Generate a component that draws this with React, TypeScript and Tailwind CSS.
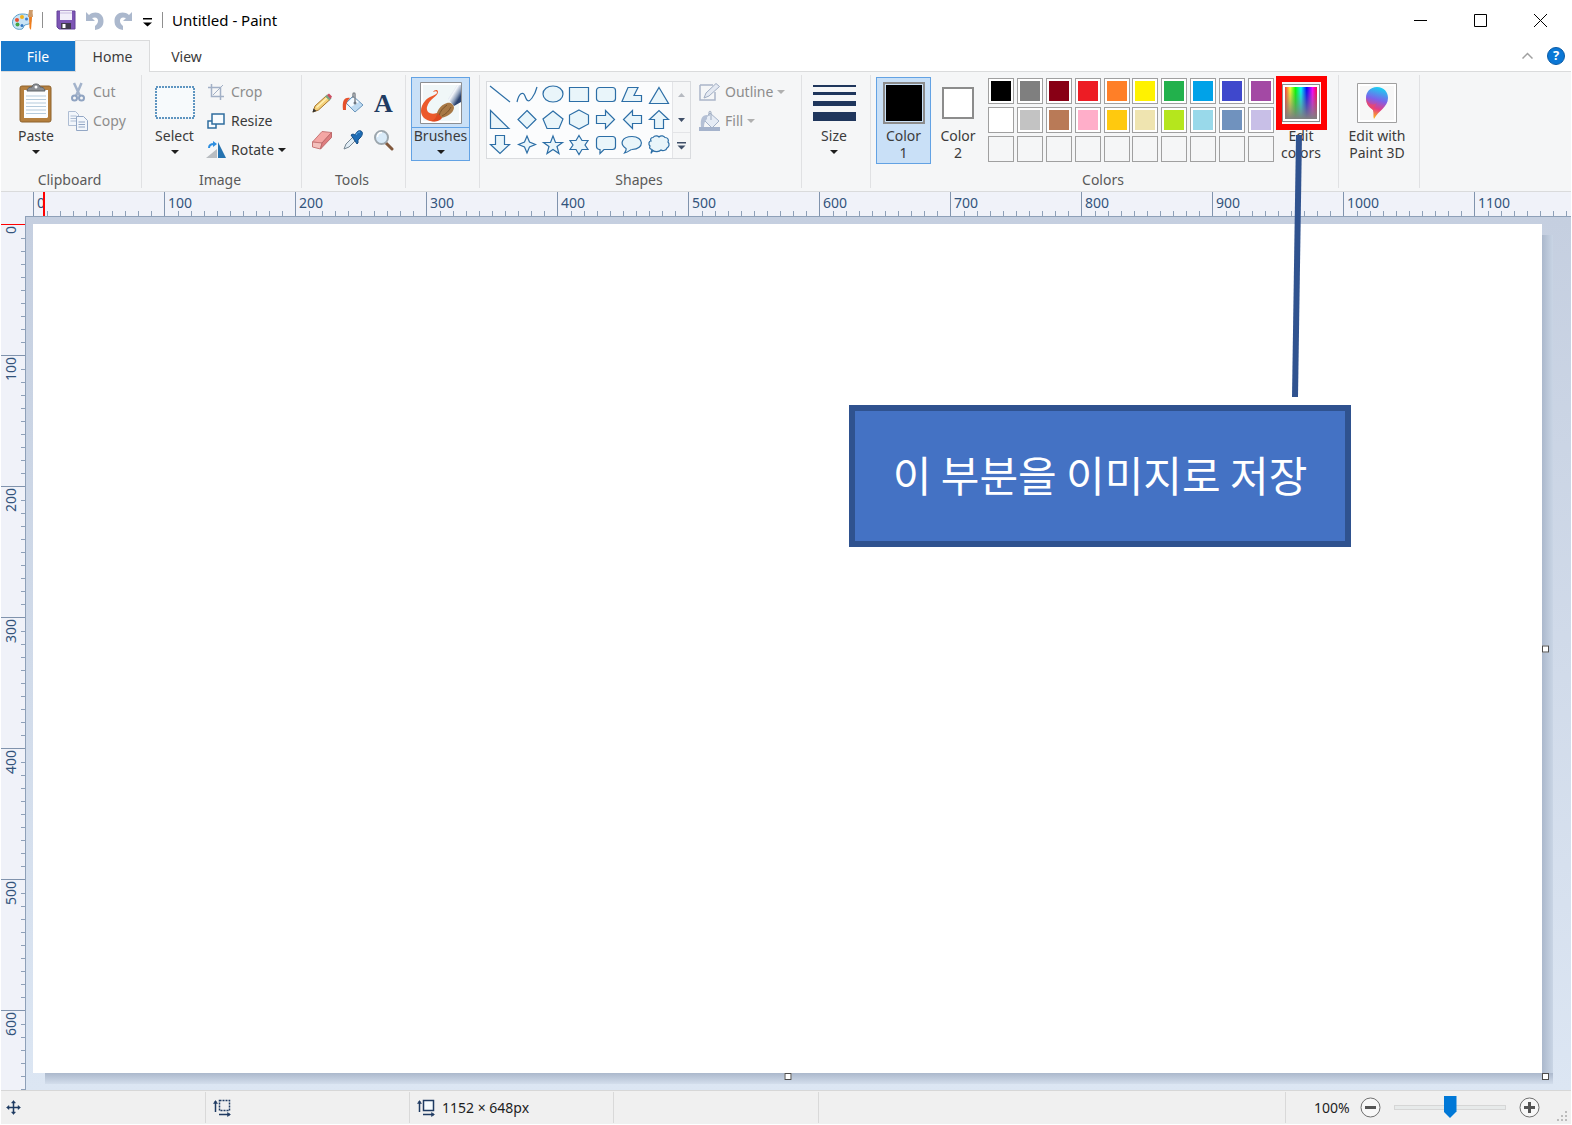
import type { ReactNode } from "react";

const paletteRows = [
  ["#000000", "#7f7f7f", "#880015", "#ed1c24", "#ff7f27", "#fff200", "#22b14c", "#00a2e8", "#3f48cc", "#a349a4"],
  ["#ffffff", "#c3c3c3", "#b97a57", "#ffaec9", "#ffc90e", "#efe4b0", "#b5e61d", "#99d9ea", "#7092be", "#c8bfe7"],
  ["", "", "", "", "", "", "", "", "", ""],
];

const shapes: { name: string; d: string }[] = [
  { name: "Line", d: "M2 3L22 19" },
  { name: "Curve", d: "M2 19C4 10 8 8 10 13C12 19 14 19 17 15C20 11 21 8 22 4" },
  { name: "Oval", d: "M2 11a10 8 0 1 0 20 0a10 8 0 1 0 -20 0z" },
  { name: "Rectangle", d: "M2.500 4.500h19v14h-19z" },
  { name: "Rounded rectangle", d: "M5.500 4.500h13a3 3 0 0 1 3 3v8a3 3 0 0 1-3 3h-13a3 3 0 0 1-3-3v-8a3 3 0 0 1 3-3z" },
  { name: "Polygon", d: "M8 4.500h10l-4 8h7.500v6h-19.500z" },
  { name: "Triangle", d: "M12 4.500L21.500 20.500H2.500z" },
  { name: "Right triangle", d: "M2.500 2.500V20.500H21z" },
  { name: "Diamond", d: "M12 2.500L21 11.500L12 20.500L3 11.500z" },
  { name: "Pentagon", d: "M12 3L22 11L18 20.500H6L2 11z" },
  { name: "Hexagon", d: "M12 2L21.500 7V16L12 21L2.500 16V7z" },
  { name: "Right arrow", d: "M2.500 7.500H11.500V2.500L20.500 11.500L11.500 20.500V15.500H2.500z" },
  { name: "Left arrow", d: "M21.500 7.500H12.500V2.500L3.500 11.500L12.500 20.500V15.500H21.500z" },
  { name: "Up arrow", d: "M7.500 20.500V11.500H2.500L12 2.500L21.500 11.500H16.500V20.500z" },
  { name: "Down arrow", d: "M7.500 2.500V11.500H2.500L12 20.500L21.500 11.500H16.500V2.500z" },
  { name: "Four-point star", d: "M12 3L14.500 9L20.500 11.500L14.500 14L12 20L9.500 14L3.500 11.500L9.500 9z" },
  { name: "Five-point star", d: "M12 3L14.500 9.500H21.500L16 13.500L18 20.500L12 16.500L6 20.500L8 13.500L2.500 9.500H9.500z" },
  { name: "Six-point star", d: "M12 2.500L15 7.500H21L18 12L21 16.500H15L12 21.500L9 16.500H3L6 12L3 7.500H9z" },
  { name: "Rounded callout", d: "M5.500 3.500h13a3 3 0 0 1 3 3v7a3 3 0 0 1-3 3h-8.500l-4 4v-4h-.5a3 3 0 0 1-3-3v-7a3 3 0 0 1 3-3z" },
  { name: "Oval callout", d: "M6 15.500C-1 11 2 3.500 12 3.500C24 3.500 25 16 12 16.500C10 16.500 9 19 4.500 20C6 18 6.500 17 6 15.500z" },
  { name: "Cloud callout", d: "M6 4.500C8 2 11 3 12 4C14 2 17 3 18 4.500C21 4.500 22 7 21 9C23 11 22 14 20 15C19 18 15 18 14 17C12 19 8 19 6 17.500L4 20.500L5 16.500C3 16 2 15 3 13C1 11 2 8 4 8C3 6 4 4.500 6 4.500z" },
];

const horizontalMarks = [0, 100, 200, 300, 400, 500, 600, 700, 800, 900, 1000, 1100];
const verticalMarks = [0, 100, 200, 300, 400, 500, 600];
const minorTicks = [0, 1, 2, 3, 4, 5, 6, 7, 8, 9];

function Caret({ className = "text-[#1e1e1e]" }: { className?: string }) {
  return (
    <svg width="8" height="4" viewBox="0 0 8 4" className={className} aria-hidden="true">
      <path d="M0 0h8L4 4z" fill="currentColor" />
    </svg>
  );
}

function Group({
  label,
  className,
  inner = "",
  children,
}: {
  label?: string;
  className: string;
  inner?: string;
  children: ReactNode;
}) {
  return (
    <section className="flex shrink-0" aria-label={label}>
      <div className={`flex flex-col pt-[5px] ${className}`}>
        <div className={`flex h-[88px] items-start ${inner}`}>{children}</div>
        <h2 className="pt-[5px] pr-[3px] text-center leading-5 text-[#5a5a5a]">{label}</h2>
      </div>
      <div className="my-[3px] w-px bg-[#e0e1e3]" />
    </section>
  );
}

function BigButton({
  icon,
  children,
  className,
}: {
  icon: ReactNode;
  children: ReactNode;
  className: string;
}) {
  return (
    <button type="button" className={`flex shrink-0 flex-col items-center border leading-[17px] ${className}`}>
      <span className="flex h-[49px] shrink-0 items-center justify-center">{icon}</span>
      {children}
    </button>
  );
}

function SmallButton({ icon, children, muted }: { icon: ReactNode; children: ReactNode; muted?: boolean }) {
  return (
    <button
      type="button"
      className={`flex h-[29px] items-center gap-1 whitespace-nowrap ${muted ? "text-[#8d8d8d]" : "text-[#3b3b3b]"}`}
    >
      <span className="flex w-[22px] justify-center">{icon}</span>
      {children}
    </button>
  );
}

function ToolButton({ label, children }: { label: string; children: ReactNode }) {
  return (
    <button type="button" aria-label={label} className="flex h-[37px] items-center justify-center">
      {children}
    </button>
  );
}

function LogoIcon() {
  return (
    <svg width="24" height="24" viewBox="0 0 24 24" aria-hidden="true">
      <path d="M11 6C4 6 0 12 2 17c1 4 6 5 9 4 2-1 1-3 3-4s6 0 6-5-4-6-9-6z" fill="#c9e4f6" stroke="#5b9fc9" />
      <circle cx="6" cy="12" r="2" fill="#e8502f" />
      <circle cx="11" cy="9" r="2" fill="#f3b41b" />
      <circle cx="15.500" cy="11" r="1.500" fill="#3c7fd0" />
      <circle cx="6.500" cy="16.500" r="2" fill="#43a447" />
      <circle cx="11" cy="17.500" r="1.500" fill="#3578c5" />
      <path d="M18 9h3l-1 13-1.500-2z" fill="#f07d1b" />
      <path d="M17 9c0-3 1-4 1-7h4c-1 3 0 4 0 7z" fill="#cd9a69" />
    </svg>
  );
}

function SaveIcon() {
  return (
    <svg width="20" height="20" viewBox="0 0 20 20" aria-hidden="true">
      <path d="M1 1h18v18H3l-2-2z" fill="#7d55b5" stroke="#65429a" />
      <path d="M4 1h12v9H4z" fill="#f1effa" />
      <path d="M4 3h12" stroke="#c8bde0" />
      <path d="M5 13h10v6H5z" fill="#40394e" />
      <path d="M6.500 14h3v4h-3z" fill="#fff" />
    </svg>
  );
}

function UndoIcon({ flip }: { flip?: boolean }) {
  return (
    <svg width="20" height="20" viewBox="0 0 20 20" className={flip ? "-scale-x-100" : ""} aria-hidden="true">
      <path d="M1 2v9h9L7 8c4-1.500 6 0 6 3 0 2-1 3-3 5v4c6-1 8.500-4 8.500-9C18.500 3 10 0 4 5z" fill="#abb8cd" />
    </svg>
  );
}

function PasteIcon() {
  return (
    <svg width="34" height="40" viewBox="0 0 34 40" aria-hidden="true">
      <rect x="1" y="3" width="31" height="36" rx="2" fill="#b5803f" stroke="#8e622c" />
      <path d="M5 7h24v27l-1 1H5z" fill="#fdfeff" />
      <path d="M7 13h20M7 16.500h20M7 20h20M7 23.500h20M7 27h20M7 30.500h20" stroke="#b5cbdc" />
      <path d="M8 8c0-3 3-4 5-4 0-4 8-4 8 0 2 0 5 1 5 4z" fill="#8b8f94" stroke="#606468" />
      <circle cx="17" cy="4" r="1.500" fill="#fff" />
    </svg>
  );
}

function CutIcon() {
  return (
    <svg width="16" height="20" viewBox="0 0 16 20" fill="none" aria-hidden="true">
      <path d="M4 1l6 13M11.500 1L6 14" stroke="#a3b3cb" strokeWidth="2.500" />
      <circle cx="4.500" cy="16" r="2.500" stroke="#8fa3c1" strokeWidth="2" />
      <circle cx="11.500" cy="16" r="2.500" stroke="#8fa3c1" strokeWidth="2" />
    </svg>
  );
}

function CopyIcon() {
  return (
    <svg width="20" height="20" viewBox="0 0 20 20" fill="#f2f6fb" stroke="#aebdd3" aria-hidden="true">
      <path d="M.5.5h7l3 3v11H.5z" />
      <path d="M2.500 5h6M2.500 7.500h6M2.500 10h6" />
      <path d="M8.500 5.500h7l4 4v10h-11z" stroke="#93a7c5" />
      <path d="M10.500 11h6.500M10.500 13.500h6.500M10.500 16h6.500" stroke="#93a7c5" />
    </svg>
  );
}

function SelectIcon() {
  return (
    <svg width="40" height="33" viewBox="0 0 40 33" aria-hidden="true">
      <rect x="1" y="1" width="38" height="31" fill="#f7fafc" stroke="#2d74ad" strokeWidth="1.500" strokeDasharray="2 1" />
    </svg>
  );
}

function CropIcon() {
  return (
    <svg width="16" height="16" viewBox="0 0 16 16" fill="none" stroke="#a2b0c6" strokeWidth="1.500" aria-hidden="true">
      <path d="M3.500 0v12.500h12.500M0 3.500h12.500v12.500" />
      <path d="M5 11L15 1" strokeWidth="1" />
    </svg>
  );
}

function ResizeIcon() {
  return (
    <svg width="18" height="16" viewBox="0 0 18 16" fill="#f7fbfe" stroke="#2f6d9f" strokeWidth="1.500" aria-hidden="true">
      <path d="M1 8h8v7H1z" />
      <path d="M5 1h12v10H5z" />
    </svg>
  );
}

function RotateIcon() {
  return (
    <svg width="22" height="18" viewBox="0 0 22 18" aria-hidden="true">
      <path d="M1 17L12 8v9z" fill="#b9bdc1" />
      <path d="M13 1l8 16h-8z" fill="#2673b0" />
      <path d="M4 7c0-3 2-4 5-4" fill="none" stroke="#2e8fe0" strokeWidth="2" />
      <path d="M8 0l4 3-4 3z" fill="#2e8fe0" />
    </svg>
  );
}

function PencilIcon() {
  return (
    <svg width="22" height="22" viewBox="0 0 22 22" aria-hidden="true">
      <path d="M2 20l2-6L15 4l4 3.500L7.500 18z" fill="#f4d079" stroke="#a5762e" />
      <path d="M5.500 15.500L16.500 5.500" stroke="#fff1b5" strokeWidth="1.500" />
      <path d="M14 4.500l2-2 4.500 4-2 2z" fill="#78a682" />
      <path d="M16 3l2-1.500 3 3L19.500 7z" fill="#cc4e62" />
      <path d="M1.500 20.500l1-4 3 2.500z" fill="#333" />
    </svg>
  );
}

function FillIcon() {
  return (
    <svg width="22" height="22" viewBox="0 0 22 22" aria-hidden="true">
      <path d="M11 4l10 9-8 7-9-9z" fill="#bfdbf2" stroke="#6a96bc" />
      <path d="M11 5.500L5 11l4 4 8-5z" fill="#f4faff" />
      <path d="M13 11V2c0-1.500-2-1.500-2 0v4" fill="none" stroke="#82888e" strokeWidth="1.500" />
      <circle cx="13" cy="11" r="1.500" fill="#6e7882" />
      <path d="M8 6C2 5 0 9 1 18h3c0-5 0-8 4-12z" fill="#e5512c" />
    </svg>
  );
}

function EraserIcon() {
  return (
    <svg width="22" height="22" viewBox="0 0 22 22" aria-hidden="true">
      <path d="M1.500 13L11 2.500l9.500 1L11 14z" fill="#f4a6a4" stroke="#c87878" />
      <path d="M1.500 13l9.500 1-1.500 6-8-2z" fill="#f3c0bc" stroke="#c87878" />
      <path d="M11 14l9.500-10.500v5l-11 11.500z" fill="#df7d7f" stroke="#bd6a6c" />
    </svg>
  );
}

function PickerIcon() {
  return (
    <svg width="22" height="22" viewBox="0 0 22 22" aria-hidden="true">
      <path d="M2 20l2-5 7-7 3 3-7 7z" fill="#e0ecf5" stroke="#758693" />
      <path d="M9 6l2-1 2 1c2-4 4-5 6-4s2 4-1 7l-2 2v3l-1 1z" fill="#1f6db5" stroke="#164f87" />
      <path d="M14 6c1-2 2-3 4-3" fill="none" stroke="#6ab0e6" />
    </svg>
  );
}

function MagnifierIcon() {
  return (
    <svg width="22" height="22" viewBox="0 0 22 22" aria-hidden="true">
      <path d="M13 14l6 6" stroke="#81583c" strokeWidth="3" strokeLinecap="round" />
      <circle cx="8.500" cy="8.500" r="6.500" fill="#d9ebf9" stroke="#9ca6ad" strokeWidth="2" />
      <path d="M4.500 8c0-3 2-4.500 4.500-4.500" fill="none" stroke="#fff" strokeWidth="1.500" />
    </svg>
  );
}

function BrushIcon() {
  return (
    <svg width="42" height="42" viewBox="0 0 42 42" aria-hidden="true">
      <defs>
        <linearGradient id="handle" x1="0" y1="0" x2="1" y2="1">
          <stop offset=".2" stopColor="#b9c6d8" />
          <stop offset=".4" stopColor="#f4f7fb" />
          <stop offset=".6" stopColor="#8d9fba" />
          <stop offset=".75" stopColor="#2c4470" />
        </linearGradient>
      </defs>
      <path d="M.5.5h41v41H.5z" fill="#fff" stroke="#8d8f92" />
      <path d="M3 3h36v36H3z" fill="#f0f7f8" />
      <path
        d="M17 11c0-2-1-2-4-1 1-2 5-3 5 0 0 4-9 7-11 15-1 5 3 8 10 6l4 5c-3 3-7 4-11 3C-1 36-1 26 5 19c4-5 10-5 12-8z"
        fill="#ec5a2b"
      />
      <path d="M28 17L37 3h4v17l-7 4z" fill="url(#handle)" />
      <path d="M16 36c0-6 4-13 11-15 3-1 7 1 7 5-1 6-9 11-18 10z" fill="#a87945" />
      <path d="M19 34c1-5 4-8 8-11M22 34c4-2 7-5 9-9" fill="none" stroke="#7d5429" />
      <path d="M11 39c4-1 5-4 7-8l4 5c-2 3-6 4-11 3z" fill="#dd4a20" />
    </svg>
  );
}

function OutlineIcon() {
  return (
    <svg width="22" height="20" viewBox="0 0 22 20" aria-hidden="true">
      <path d="M1 3h13M1 3v15h15v-8" fill="none" stroke="#aab5c9" strokeWidth="1.500" />
      <path d="M5 16l2-5L17 1.500l3.500 3L10 14z" fill="#e4e9f2" stroke="#a0adc3" />
    </svg>
  );
}

function ShapeFillIcon() {
  return (
    <svg width="22" height="22" viewBox="0 0 22 22" aria-hidden="true">
      <path d="M0 17h21v4H0z" fill="#a5b3cc" />
      <path d="M11 3l9 8-7 7-8-8z" fill="#e6ecf5" stroke="#a3b1c8" />
      <path d="M12 10V2c0-1-2-1-2 0v4" fill="none" stroke="#9caabf" />
      <path d="M8 5C3 5 1 9 2 17h3c0-4 1-6 3-8z" fill="#b4c0d5" />
    </svg>
  );
}

function SizeIcon() {
  return (
    <svg width="43" height="38" viewBox="0 0 43 38" fill="#1f365c" aria-hidden="true">
      <path d="M0 1h43v2H0zM0 8h43v3H0zM0 17h43v5H0zM0 28h43v9H0z" />
    </svg>
  );
}

function SpectrumIcon() {
  return (
    <span className="flex size-[38px] border border-[#8c8c8c] bg-white p-[2px]">
      <span className="flex flex-1 bg-[linear-gradient(to_right,#f33,#ff3_16%,#0f0_33%,#0ff_50%,#00f_68%,#f0f_86%,#f04)]">
        <span className="flex-1 bg-linear-to-b from-transparent to-[#808080]" />
      </span>
    </span>
  );
}

function Paint3DIcon() {
  return (
    <svg width="40" height="40" viewBox="0 0 40 40" aria-hidden="true">
      <defs>
        <linearGradient id="drop" x1=".6" y1="0" x2=".4" y2="1">
          <stop offset="0" stopColor="#17d3f2" />
          <stop offset=".4" stopColor="#7b62ea" />
          <stop offset=".68" stopColor="#e53c83" />
          <stop offset="1" stopColor="#ffc30d" />
        </linearGradient>
      </defs>
      <path d="M.5.5h39v39H.5z" fill="#fff" stroke="#a0a0a0" />
      <path d="M3 3h34v34H3z" fill="#f7f7f7" />
      <path d="M20 4c7 0 11 5 11 11 0 9-10 13-14 21-1-3 0-6-1-9-4-3-7-6-7-12C9 9 13 4 20 4z" fill="url(#drop)" />
      <path d="M9 15c3 7 6 8 11 5-3 4-4 8-3 16-1-3 0-6-1-9-4-3-7-6-7-12z" fill="#ef4b63" opacity=".6" />
    </svg>
  );
}

function TitleBar() {
  return (
    <header className="flex h-10 shrink-0 items-center text-black">
      <span className="ml-2.5 flex">
        <LogoIcon />
      </span>
      <span className="ml-[7px] h-4 w-px bg-[#8f8f8f]" />
      <button type="button" aria-label="Save" className="ml-2 flex w-[30px] justify-center">
        <SaveIcon />
      </button>
      <button type="button" aria-label="Undo" className="flex w-7 justify-center">
        <UndoIcon />
      </button>
      <button type="button" aria-label="Redo" className="flex w-7 justify-center">
        <UndoIcon flip />
      </button>
      <button type="button" aria-label="Customize Quick Access Toolbar" className="flex w-5 justify-center pt-1">
        <svg width="9" height="9" viewBox="0 0 9 9" aria-hidden="true">
          <path d="M0 0h9v1.500H0zM0 4.500h9L4.500 8.500z" />
        </svg>
      </button>
      <span className="ml-[5px] h-4 w-px bg-[#8f8f8f]" />
      <h1 className="ml-[9px] flex-1 text-[15px]">Untitled - Paint</h1>
      <div className="flex pr-px">
        <button type="button" aria-label="Minimize" className="flex w-[59px] justify-center">
          <svg width="13" height="13" viewBox="0 0 13 13" stroke="#000" fill="none" aria-hidden="true">
            <path d="M0 6.500h13" />
          </svg>
        </button>
        <button type="button" aria-label="Maximize" className="flex w-[60px] justify-center">
          <svg width="13" height="13" viewBox="0 0 13 13" stroke="#000" fill="none" aria-hidden="true">
            <path d="M.5.5h12v12H.5z" />
          </svg>
        </button>
        <button type="button" aria-label="Close" className="flex w-[60px] justify-center">
          <svg width="13" height="13" viewBox="0 0 13 13" stroke="#000" fill="none" aria-hidden="true">
            <path d="M0 0l13 13M13 0L0 13" />
          </svg>
        </button>
      </div>
    </header>
  );
}

function Tabs() {
  return (
    <nav className="flex h-8 shrink-0">
      <button type="button" className="mt-px w-[74px] border-b border-[#dadbdc] bg-[#1979ca] text-white">
        File
      </button>
      <button type="button" className="w-[75px] border border-b-0 border-[#dadbdc] bg-[#f5f6f7] text-[#3b3b3b]">
        Home
      </button>
      <button type="button" className="w-[73px] border-b border-[#dadbdc] pt-px text-[#3b3b3b]">
        View
      </button>
      <div className="flex flex-1 items-center justify-end gap-[14px] border-b border-[#dadbdc] pr-[6px]">
        <button type="button" aria-label="Minimize the Ribbon">
          <svg width="11" height="7" viewBox="0 0 11 7" fill="none" stroke="#a0a0a0" strokeWidth="1.500" aria-hidden="true">
            <path d="M.5 6.500l5-5 5 5" />
          </svg>
        </button>
        <button
          type="button"
          aria-label="Help"
          className="flex size-[18px] items-center justify-center rounded-full border border-[#0a5ba6] bg-[#0b77d5] text-[13px] font-bold text-white"
        >
          ?
        </button>
      </div>
    </nav>
  );
}

function ShapeGallery() {
  return (
    <div className="mt-1 flex h-[78px] border border-[#d9dbde] bg-[#fbfcfd]">
      <div className="grid w-[185px] grid-cols-7 grid-rows-3">
        {shapes.map((shape) => (
          <button key={shape.name} type="button" aria-label={shape.name} className="flex items-center justify-center">
            <svg width="24" height="24" viewBox="0 0 24 24" fill="#e9f5fa" stroke="#2c6ea6" strokeWidth="1.200" aria-hidden="true">
              <path d={shape.d} fill={shape.name === "Line" || shape.name === "Curve" ? "none" : undefined} />
            </svg>
          </button>
        ))}
      </div>
      <div className="flex w-[18px] flex-col border-l border-[#e3e4e7] bg-[#f5f6f7]">
        <button type="button" aria-label="Scroll up" className="flex flex-1 items-center justify-center">
          <svg width="7" height="4" viewBox="0 0 7 4" fill="#b6bac1" aria-hidden="true">
            <path d="M0 4h7L3.500 0z" />
          </svg>
        </button>
        <button type="button" aria-label="Scroll down" className="flex flex-1 items-center justify-center">
          <svg width="7" height="4" viewBox="0 0 7 4" fill="#3f4f68" aria-hidden="true">
            <path d="M0 0h7L3.500 4z" />
          </svg>
        </button>
        <button type="button" aria-label="More shapes" className="flex flex-1 items-center justify-center border-t border-[#e3e4e7]">
          <svg width="9" height="8" viewBox="0 0 9 8" fill="#3f4f68" aria-hidden="true">
            <path d="M0 0h9v1.500H0zM0.500 3.500h8L4.500 7.500z" />
          </svg>
        </button>
      </div>
    </div>
  );
}

function Ribbon() {
  return (
    <div className="flex h-[120px] shrink-0 border-b border-[#dadbdc] bg-[#f5f6f7] text-[#3b3b3b]">
      <Group label="Clipboard" className="w-[140px]" inner="pl-1">
        <BigButton icon={<PasteIcon />} className="w-[62px] border-transparent">
          Paste
          <span className="mt-1.5"><Caret /></span>
        </BigButton>
        <div>
          <SmallButton icon={<CutIcon />} muted>Cut</SmallButton>
          <SmallButton icon={<CopyIcon />} muted>Copy</SmallButton>
        </div>
      </Group>
      <Group label="Image" className="w-[159px]" inner="pl-[2px]">
        <BigButton icon={<SelectIcon />} className="w-[61px] border-transparent">
          Select
          <span className="mt-1.5"><Caret /></span>
        </BigButton>
        <div>
          <SmallButton icon={<CropIcon />} muted>Crop</SmallButton>
          <SmallButton icon={<ResizeIcon />}>Resize</SmallButton>
          <SmallButton icon={<RotateIcon />}>
            Rotate <Caret />
          </SmallButton>
        </div>
      </Group>
      <Group label="Tools" className="w-[103px]">
        <div className="grid grid-cols-[repeat(3,31px)] pt-[7px] pl-1">
          <ToolButton label="Pencil"><PencilIcon /></ToolButton>
          <ToolButton label="Fill with color"><FillIcon /></ToolButton>
          <button type="button" aria-label="Text" className="h-[37px] font-['Liberation_Serif',serif] text-[26px] font-bold text-[#1f3b62]">
            A
          </button>
          <ToolButton label="Eraser"><EraserIcon /></ToolButton>
          <ToolButton label="Color picker"><PickerIcon /></ToolButton>
          <ToolButton label="Magnifier"><MagnifierIcon /></ToolButton>
        </div>
      </Group>
      <Group className="w-[73px]" inner="pl-[5px]">
        <BigButton icon={<BrushIcon />} className="h-[84px] w-[59px] border-[#62a2e4] bg-[#c9e0f7]">
          <span className="h-[17px] w-full border-t border-[#62a2e4] leading-4">Brushes</span>
          <span className="mt-1.5"><Caret /></span>
        </BigButton>
      </Group>
      <Group label="Shapes" className="w-[321px]" inner="pl-[6px]">
        <ShapeGallery />
        <div className="pl-2">
          <SmallButton icon={<OutlineIcon />} muted>
            Outline <Caret className="text-[#b0b0b0]" />
          </SmallButton>
          <SmallButton icon={<ShapeFillIcon />} muted>
            Fill <Caret className="text-[#b0b0b0]" />
          </SmallButton>
        </div>
      </Group>
      <Group className="w-[68px]" inner="pl-[2px]">
        <BigButton icon={<SizeIcon />} className="w-[60px] border-transparent">
          Size
          <span className="mt-1.5"><Caret /></span>
        </BigButton>
      </Group>
      <Group label="Colors" className="w-[467px]" inner="pl-[5px]">
        <BigButton
          className="h-[87px] w-[55px] border-[#62a2e4] bg-[#c9e0f7]"
          icon={
            <span className="flex size-[42px] border-2 border-[#8c8c8c] bg-[#c9e0f7] p-px">
              <span className="flex-1 bg-black" />
            </span>
          }
        >
          Color<br />1
        </BigButton>
        <BigButton className="w-[54px] border-transparent" icon={<span className="size-8 border-2 border-[#8c8c8c] bg-white" />}>
          Color<br />2
        </BigButton>
        <div className="mt-px ml-[3px] grid w-[286px] shrink-0 grid-cols-[repeat(10,26px)] justify-between gap-y-[3px]">
          {paletteRows.flat().map((color, i) => (
            <button
              key={i}
              type="button"
              aria-label={color || "Empty custom color"}
              className={`flex size-[26px] border border-[#a0a0a0] p-[2px] ${color ? "bg-white" : "bg-[#f5f6f7]"}`}
            >
              <span className="h-full flex-1" style={{ backgroundColor: color || "transparent" }} />
            </button>
          ))}
        </div>
        <BigButton icon={<SpectrumIcon />} className="w-[54px] border-transparent">
          Edit<br />colors
        </BigButton>
      </Group>
      <Group className="w-[80px]">
        <BigButton icon={<Paint3DIcon />} className="w-[76px] border-transparent">
          Edit with<br />Paint 3D
        </BigButton>
      </Group>
    </div>
  );
}

function HorizontalRuler() {
  return (
    <div className="relative flex h-[25px] shrink-0 overflow-hidden bg-[#f0f2f9] pl-8 text-[#33547c]">
      {horizontalMarks.map((mark) => (
        <div key={mark} className="flex w-[131px] shrink-0 flex-col justify-between border-l border-[#8093ad]">
          <span className="pt-[2px] pl-[3px] leading-[17px]">{mark}</span>
          <div className="flex">
            {minorTicks.map((tick) => (
              <span key={tick} className={`h-[6px] flex-1 border-l ${tick ? "border-[#8ea0b8]" : "border-transparent"}`} />
            ))}
          </div>
        </div>
      ))}
      <span className="absolute inset-y-0 left-[42px] w-[2px] bg-[#ff0000]" />
      <span className="absolute right-0 bottom-0 left-6 h-px bg-[#8ea0b8]" />
    </div>
  );
}

function VerticalRuler() {
  return (
    <div className="w-[25px] shrink-0 overflow-hidden border-r border-[#8ea0b8] bg-[#f0f2f9] pt-[7px] text-[#33547c]">
      {verticalMarks.map((mark) => (
        <div key={mark} className={`flex h-[131px] justify-between border-t ${mark ? "border-[#8093ad]" : "border-[#ff0000]"}`}>
          <span className="rotate-180 self-start pb-px leading-5 [writing-mode:vertical-rl]">{mark}</span>
          <div className="flex w-[5px] shrink-0 flex-col">
            {minorTicks.map((tick) => (
              <span key={tick} className={`flex-1 border-t ${tick ? "border-[#8ea0b8]" : "border-transparent"}`} />
            ))}
          </div>
        </div>
      ))}
    </div>
  );
}

function Workspace() {
  return (
    <main className="flex min-h-0 flex-1">
      <VerticalRuler />
      <div className="flex flex-1 bg-linear-to-b from-[#c5cfe0] to-[#dce6f3] pt-[7px] pr-[29px] pb-[17px] pl-[7px]">
        <div className="relative flex-1 bg-white">
          <span className="absolute top-[11px] -right-[11px] h-full w-[11px] bg-linear-to-r from-[#abb8cc] to-[#c9d5e5]" />
          <span className="absolute -right-[11px] -bottom-[11px] left-3 h-[11px] bg-linear-to-b from-[#abb8cc] to-[#d3deec]" />
          <span className="absolute top-1/2 -right-[7px] size-[7px] -translate-y-1/2 border border-[#4c4c4c] bg-white" />
          <span className="absolute -bottom-[7px] left-1/2 size-[7px] -translate-x-1/2 border border-[#4c4c4c] bg-white" />
          <span className="absolute -right-[7px] -bottom-[7px] size-[7px] border border-[#4c4c4c] bg-white" />
        </div>
      </div>
    </main>
  );
}

function StatusBar() {
  return (
    <footer className="flex h-[34px] shrink-0 border-t border-[#d7d7d7] bg-[#f0f0f0] py-px text-[#1e1e1e]">
      <div className="flex w-[205px] items-center border-r border-[#d9d9d9] pl-[5px]">
        <svg width="15" height="15" viewBox="0 0 15 15" stroke="#1f3b62" fill="#1f3b62" aria-hidden="true">
          <path d="M7.500 2v11M2 7.500h11" strokeWidth="1.500" />
          <path d="M5.500 3L7.500.5 9.500 3zM5.500 12l2 2.500 2-2.500zM3 5.500L.5 7.500 3 9.500zM12 5.500l2.500 2-2.500 2z" strokeWidth=".5" />
        </svg>
      </div>
      <div className="flex w-[204px] items-center border-r border-[#d9d9d9] pl-[7px]">
        <svg width="18" height="18" viewBox="0 0 18 18" stroke="#1f3b62" fill="none" aria-hidden="true">
          <path d="M2.500 13V2M6 15.500h11" strokeWidth="1.500" />
          <path d="M.5 4.500l2-3 2 3zM14.500 13.500l3 2-3 2z" fill="#1f3b62" strokeWidth=".5" />
          <path d="M6.500 1.500h10v10h-10z" strokeDasharray="2 1" strokeWidth="1.500" />
        </svg>
      </div>
      <div className="flex w-[204px] items-center gap-[7px] border-r border-[#d9d9d9] pl-[7px]">
        <svg width="18" height="18" viewBox="0 0 18 18" stroke="#1f3b62" fill="none" aria-hidden="true">
          <path d="M2.500 13V2M6 15.500h11" strokeWidth="1.500" />
          <path d="M.5 4.500l2-3 2 3zM14.500 13.500l3 2-3 2z" fill="#1f3b62" strokeWidth=".5" />
          <path d="M6.500 1.500h10v10h-10z" fill="#f6fbfe" strokeWidth="1.500" />
        </svg>
        1152 × 648px
      </div>
      <div className="w-[205px] border-r border-[#d9d9d9]" />
      <div className="flex-1 border-r border-[#d9d9d9]" />
      <div className="flex w-[285px] items-center pl-[28px]">
        <label htmlFor="zoom" className="w-[46px]">100%</label>
        <button type="button" aria-label="Zoom out">
          <svg width="21" height="21" viewBox="0 0 21 21" aria-hidden="true">
            <circle cx="10.500" cy="10.500" r="9.500" fill="#f8f8f8" stroke="#707070" />
            <path d="M5 9h11v3H5z" fill="#555" />
          </svg>
        </button>
        <input
          id="zoom"
          type="range"
          defaultValue={50}
          className="mx-[13px] h-[22px] w-[112px] appearance-none bg-transparent [&::-webkit-slider-runnable-track]:h-[5px] [&::-webkit-slider-runnable-track]:border [&::-webkit-slider-runnable-track]:border-[#d6d6d6] [&::-webkit-slider-runnable-track]:bg-[#e7eaea] [&::-webkit-slider-thumb]:-mt-[10px] [&::-webkit-slider-thumb]:h-[22px] [&::-webkit-slider-thumb]:w-[13px] [&::-webkit-slider-thumb]:appearance-none [&::-webkit-slider-thumb]:bg-[#0078d7] [&::-webkit-slider-thumb]:[clip-path:polygon(0_0,100%_0,100%_70%,50%_100%,0_70%)]"
        />
        <button type="button" aria-label="Zoom in">
          <svg width="21" height="21" viewBox="0 0 21 21" aria-hidden="true">
            <circle cx="10.500" cy="10.500" r="9.500" fill="#f8f8f8" stroke="#707070" />
            <path d="M5 9h11v3H5zM9 5h3v11H9z" fill="#555" />
          </svg>
        </button>
        <svg width="11" height="11" viewBox="0 0 11 11" fill="#bcbcbc" className="mr-[3px] mb-px ml-auto self-end" aria-hidden="true">
          <path d="M8 0h2v2H8zM4 4h2v2H4zM8 4h2v2H8zM0 8h2v2H0zM4 8h2v2H4zM8 8h2v2H8z" />
        </svg>
      </div>
    </footer>
  );
}

// Tutorial markup drawn over the window
function Annotation() {
  return (
    <div className="pointer-events-none">
      <div className="absolute top-[76px] left-[1276px] h-[54px] w-[51px] border-[6px] border-[#ff0000]" />
      <svg className="absolute top-[134px] left-[1290px]" width="14" height="264" viewBox="0 0 14 264" aria-hidden="true">
        <path d="M9 1L5 263" stroke="#2f528f" strokeWidth="6" />
      </svg>
      <p className="absolute top-[405px] left-[849px] flex h-[142px] w-[502px] items-center justify-center border-[6px] border-[#2f528f] bg-[#4472c4] pb-1.5 font-['Noto_Sans_CJK_KR',sans-serif] text-[42px] text-white">
        이 부분을 이미지로 저장
      </p>
    </div>
  );
}

export default function App() {
  return (
    <div className="relative flex h-screen flex-col overflow-hidden bg-white px-px pb-px font-['Noto_Sans','Noto_Sans_CJK_KR',sans-serif] text-[14px]">
      <TitleBar />
      <Tabs />
      <Ribbon />
      <HorizontalRuler />
      <Workspace />
      <StatusBar />
      <Annotation />
    </div>
  );
}
